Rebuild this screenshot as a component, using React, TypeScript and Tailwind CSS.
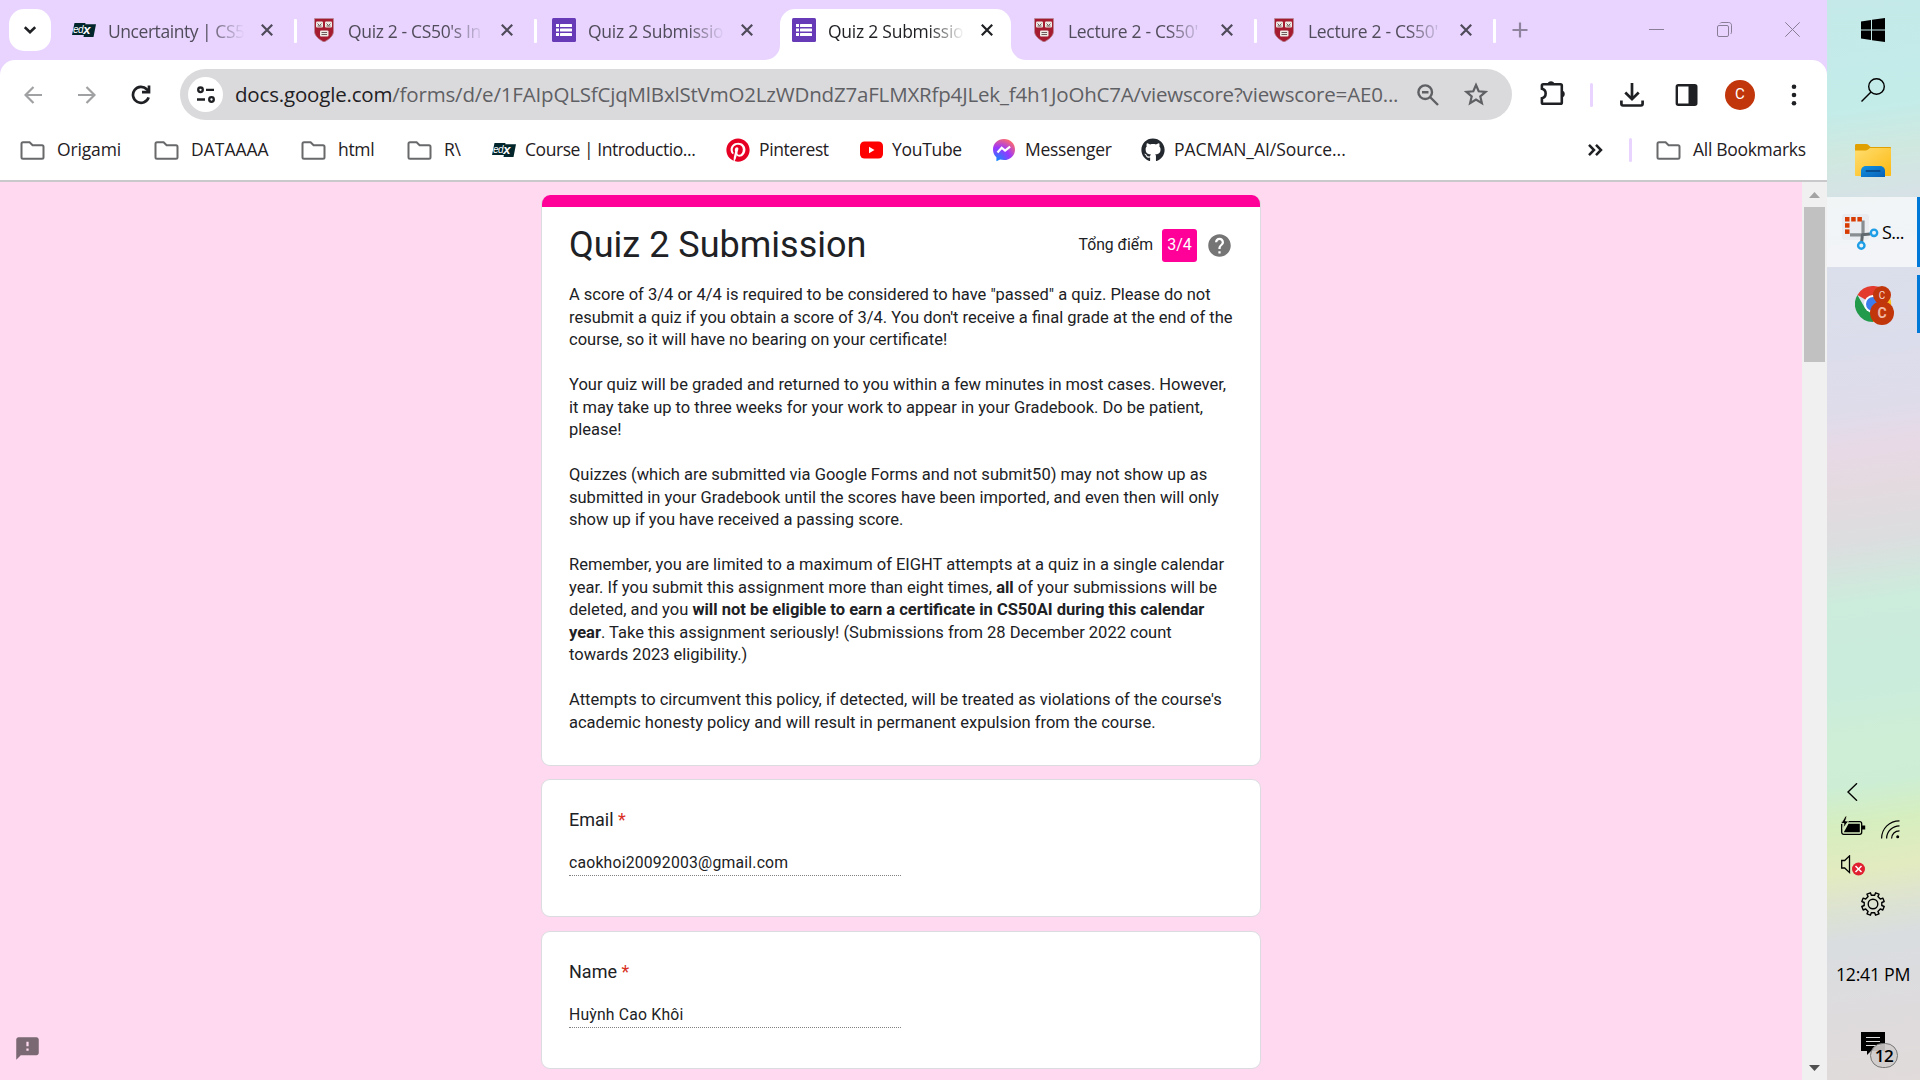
import type { ReactNode } from "react";
import { FaGithub, FaPinterest } from "react-icons/fa";

const SEGOE = "font-['Open_Sans','Noto_Sans',sans-serif]";

function Shield() {
  return (
    <svg width="24" height="24" viewBox="0 0 24 24">
      <path d="M2.500 .5h19v13c0 4-4 8-9.500 10.500C6.500 21.500 2.500 17.500 2.500 13.500z" fill="#a51c30" stroke="#b98a9a" strokeWidth=".8" />
      <g fill="#efe9e4">
        <rect x="4" y="3.500" width="7" height="6" rx="1" />
        <rect x="13" y="3.500" width="7" height="6" rx="1" />
        <rect x="8" y="12.500" width="8.500" height="6" rx="1" />
      </g>
      <g fill="none" stroke="#6d5b59" strokeWidth="1">
        <path d="M5.500 5.500l2 2 2-2M5.500 8h4M14.500 5.500l2 2 2-2M14.500 8h4M9.500 14.500h5.500M9.500 16.500h5.500" />
      </g>
    </svg>
  );
}

function FormsIcon() {
  return (
    <svg width="24" height="24" viewBox="0 0 24 24">
      <rect width="24" height="24" rx="1.500" fill="#673ab7" />
      <g fill="#fff">
        <rect x="4" y="6" width="3" height="3" />
        <rect x="4" y="10.500" width="3" height="3" />
        <rect x="4" y="15" width="3" height="3" />
        <rect x="8" y="6" width="12" height="3" rx=".5" />
        <rect x="8" y="10.500" width="12" height="3" rx=".5" />
        <rect x="8" y="15" width="12" height="3" rx=".5" />
      </g>
    </svg>
  );
}

function EdxIcon() {
  return (
    <span className="relative flex h-6 w-6 items-center">
      <svg className="absolute inset-0" width="24" height="24" viewBox="0 0 24 24">
        <path d="M2.500 5h11l-.3 1.300H24L21.500 19h-10l.4-2H0z" fill="#02262b" />
      </svg>
      <span className="relative mb-1 pl-[1px] font-['Liberation_Sans',sans-serif] text-[10px] leading-none tracking-[-0.5px] text-white italic">
        ed<b className="relative top-px text-[13px]">x</b>
      </span>
    </span>
  );
}

function Cross({ color }: { color: string }) {
  return (
    <svg width="12" height="12" viewBox="0 0 12 12" fill="none" stroke={color} strokeWidth="2.200">
      <path d="M.8 .8l10.400 10.400M11.200 .8L.8 11.200" />
    </svg>
  );
}

function Folder() {
  return (
    <svg width="25" height="19" viewBox="0 0 25 19" fill="none" stroke="#68696b" strokeWidth="2">
      <path d="M3 1.200h6.600l3 3H22c.9 0 1.500.7 1.500 1.500v10.600c0 .8-.7 1.500-1.500 1.500H3c-.9 0-1.500-.7-1.500-1.500V2.700c0-.8.6-1.500 1.500-1.500z" />
    </svg>
  );
}

type TabProps = { icon: ReactNode; title: string; active?: boolean; divider?: boolean; track: string; last?: boolean };

function Tab({ icon, title, active, divider, track, last }: TabProps) {
  return (
    <div className={`relative flex h-[51px] shrink-0 items-center ${last ? "w-[239px]" : "w-[240px]"}`}>
      <div className={`relative flex h-full items-center pb-[9px] pl-3 ${active ? "w-[231px] rounded-t-[15px] bg-white" : last ? "w-[230px]" : "w-[231px]"}`}>
        {active && (
          <>
            <span className="absolute bottom-0 left-[-15px] h-[15px] w-[15px] bg-white">
              <span className="block h-full w-full rounded-br-[15px] bg-[#e8d4ff]" />
            </span>
            <span className="absolute right-[-15px] bottom-0 h-[15px] w-[15px] bg-white">
              <span className="block h-full w-full rounded-bl-[15px] bg-[#e8d4ff]" />
            </span>
          </>
        )}
        {icon}
        <span
          className={`ml-3 w-[138px] pt-[3px] text-[17.5px] whitespace-nowrap [mask-image:linear-gradient(to_right,black_72%,transparent_99%)] ${track} ${active ? "text-[#1f2023]" : "text-[#514c5b]"}`}
        >
          {title}
        </span>
        <span className="ml-auto pr-[18px]">
          <Cross color={active ? "#1f2023" : "#4f4a59"} />
        </span>
      </div>
      {divider && <span className="mb-[7px] ml-[3px] h-6 w-[3px] rounded-[1px] bg-white" />}
    </div>
  );
}

function TabStrip() {
  return (
    <div className="flex h-[60px] items-start bg-[#e8d4ff] pt-[9px]">
      <div className="ml-[9px] flex h-[42px] w-[42px] items-center justify-center rounded-[15px] bg-white">
        <svg width="12" height="8" viewBox="0 0 12 8" fill="none" stroke="#1f2023" strokeWidth="2.600">
          <path d="M.8 1.200L6 6.200l5.200-5" />
        </svg>
      </div>
      <div className="ml-[9px] flex">
        <Tab icon={<EdxIcon />} title="Uncertainty | CS5" divider track="tracking-[-0.45px]" />
        <Tab icon={<Shield />} title="Quiz 2 - CS50's In" divider track="tracking-[-0.35px]" />
        <Tab icon={<FormsIcon />} title="Quiz 2 Submissio" track="tracking-[-0.25px]" />
        <Tab icon={<FormsIcon />} title="Quiz 2 Submissio" active track="tracking-[-0.25px]" />
        <Tab icon={<Shield />} title="Lecture 2 - CS50'" divider track="tracking-[-0.3px]" />
        <Tab icon={<Shield />} title="Lecture 2 - CS50'" divider last track="tracking-[-0.3px]" />
      </div>
      <svg className="mt-[13px] ml-[13px]" width="16" height="16" viewBox="0 0 16 16" fill="none" stroke="#90839e" strokeWidth="2.200">
        <path d="M8 .5v15M.5 8h15" />
      </svg>
      <div className="mt-[13px] mr-[27px] ml-auto flex items-center gap-[53px] text-[#8a7e97]">
        <svg width="15" height="15" viewBox="0 0 15 15" stroke="currentColor"><path d="M0 7.500h15" /></svg>
        <svg width="15" height="15" viewBox="0 0 15 15" fill="none" stroke="currentColor">
          <rect x=".5" y="3.500" width="11" height="11" rx="1.500" />
          <path d="M3 1.500C3.300 .8 4 .5 4.800 .5h7c1.500 0 2.700 1.200 2.700 2.700v7c0 .8-.4 1.500-1 1.800" />
        </svg>
        <svg width="15" height="15" viewBox="0 0 15 15" stroke="currentColor"><path d="M.3 .3l14.400 14.400M14.700 .3L.3 14.700" /></svg>
      </div>
    </div>
  );
}

function Toolbar() {
  return (
    <div className="bg-[#e8d4ff]">
      <div className="flex h-[69px] items-center rounded-t-[15px] bg-white">
        <svg className="ml-6" width="18" height="18" viewBox="0 0 18 18" fill="none" stroke="#a0a1a3" strokeWidth="2.200">
          <path d="M18 9H1.500M9.500 .9L1.500 9l8 8.100" />
        </svg>
        <svg className="ml-9" width="18" height="18" viewBox="0 0 18 18" fill="none" stroke="#a0a1a3" strokeWidth="2.200">
          <path d="M0 9h16.500M8.500 .9l8 8.100-8 8.100" />
        </svg>
        <svg className="ml-[35px]" width="20" height="20" viewBox="0 0 20 20" fill="none" stroke="#1f2023" strokeWidth="2.700">
          <path d="M17.600 12.300A8 8 0 1 1 15.800 4.300L18 6.500" />
          <path d="M18 .5v6.700h-7" />
        </svg>
        <div className="ml-[29px] flex h-[51px] w-[1332px] items-center rounded-full bg-[#dadadc] pl-2">
          <span className="flex h-[35px] w-[35px] items-center justify-center rounded-full bg-white">
            <svg width="20" height="18" viewBox="0 0 20 18" fill="none" stroke="#1f2023" strokeWidth="2.300">
              <circle cx="4.500" cy="3.800" r="2.300" />
              <path d="M10 3.800h8M1 13.500h8" />
              <circle cx="15.500" cy="13.500" r="2.300" />
            </svg>
          </span>
          <span className="ml-[12px] w-[1168px] text-[20.500px] tracking-[-0.18px] whitespace-nowrap text-[#5f6064]">
            <span className="text-[#1f2023]">docs.google.com</span>
            /forms/d/e/1FAIpQLSfCjqMlBxlStVmO2LzWDndZ7aFLMXRfp4JLek_f4h1JoOhC7A/viewscore?viewscore=AE0...
          </span>
          <svg className="ml-[14px]" width="22" height="22" viewBox="0 0 22 22" fill="none" stroke="#5f6064" strokeWidth="2.400">
            <circle cx="8.200" cy="8.200" r="6.800" />
            <path d="M13 13l8 8M5 8.200h6.500" />
          </svg>
          <svg className="mb-0.5 ml-[25px]" width="24" height="24" viewBox="0 0 24 24" fill="none" stroke="#5f6064" strokeWidth="2.200">
            <path d="M12 3l2.700 6.300 6.800.6-5.200 4.500 1.600 6.700L12 17.500l-5.900 3.600 1.600-6.700-5.200-4.500 6.800-.6z" />
          </svg>
        </div>
        <svg className="mb-1 ml-[27px]" width="27" height="26" viewBox="0 0 27 26">
          <path d="M5 4.200h16.500c.8 0 1.300.5 1.300 1.300v17c0 .8-.5 1.300-1.300 1.300H4.200c-.8 0-1.300-.5-1.300-1.300v-4.300c5-1 5-8.400 0-9.400V5.500c0-.8.5-1.300 1.300-1.300z" fill="none" stroke="#1f2023" strokeWidth="2.600" />
          <path d="M8.500 4a3.600 3.600 0 0 1 7 0zM23 10.500a3.600 3.600 0 0 1 0 7z" fill="#1f2023" />
        </svg>
        <span className="ml-6 h-6 w-[3px] rounded-sm bg-[#e8d4ff]" />
        <svg className="ml-[27px]" width="24" height="24" viewBox="0 0 24 24" fill="none" stroke="#1f2023" strokeWidth="2.700">
          <path d="M12 0v15.500M5.300 9.500l6.700 6.700 6.700-6.700M1.400 17.500v3.300c0 1 .6 1.700 1.600 1.700h18c1 0 1.600-.7 1.600-1.700v-3.300" />
        </svg>
        <svg className="ml-[31px]" width="23" height="22" viewBox="0 0 23 22">
          <rect x="1.800" y="1.200" width="19.500" height="19.500" rx="1.500" fill="none" stroke="#1f2023" strokeWidth="2.400" />
          <path d="M13.500 1H20c1 0 1.700.8 1.700 1.800v16.400c0 1-.8 1.800-1.700 1.800h-6.500z" fill="#1f2023" />
        </svg>
        <span className="ml-[27px] flex h-[30px] w-[30px] items-center justify-center rounded-full bg-[#c1360b] font-['Roboto',sans-serif] text-[15px] text-white">C</span>
        <svg className="ml-[36px]" width="6" height="22" viewBox="0 0 6 22" fill="#1f2023">
          <circle cx="3" cy="2.700" r="2.300" /><circle cx="3" cy="11" r="2.300" /><circle cx="3" cy="19.300" r="2.300" />
        </svg>
      </div>
    </div>
  );
}

function Bookmark({ icon, label, box, gap = "ml-[9px]" }: { icon: ReactNode; label: string; box: string; gap?: string }) {
  return (
    <div className={`flex shrink-0 items-center whitespace-nowrap ${box}`}>
      <span className="flex w-[25px] shrink-0 items-center">{icon}</span>
      <span className={`-mt-0.5 ${gap}`}>{label}</span>
    </div>
  );
}

function BookmarksBar() {
  return (
    <div className="flex h-[51px] items-center bg-white pb-[9px] pl-5 text-[17.5px] text-[#1f2023]">
      <Bookmark icon={<Folder />} label="Origami" gap="ml-3" box="w-[134px] tracking-[-0.15px]" />
      <Bookmark icon={<Folder />} label="DATAAAA" gap="ml-3" box="w-[147px] tracking-[0px]" />
      <Bookmark icon={<Folder />} label="html" gap="ml-3" box="w-[106px] tracking-[-0.3px]" />
      <Bookmark icon={<Folder />} label="R\" gap="ml-3" box="w-[85px] tracking-[-0.2px]" />
      <Bookmark icon={<EdxIcon />} label="Course | Introductio..." gap="ml-2" box="w-[234px] tracking-[-0.45px]" />
      <Bookmark icon={<FaPinterest size={24} color="#e60023" />} label="Pinterest" gap="ml-2" box="w-[133px] tracking-[-0.4px]" />
      <Bookmark
        icon={
          <svg width="24" height="24" viewBox="0 0 24 24">
            <rect x="1" y="3.500" width="23" height="17" rx="4.500" fill="#f00" />
            <path d="M10 8.800v6.400l5.500-3.200z" fill="#fff" />
          </svg>
        }
        label="YouTube"
        gap="ml-2"
        box="w-[133px] tracking-[-0.3px]"
      />
      <Bookmark
        icon={
          <svg width="24" height="24" viewBox="0 0 24 24">
            <defs>
              <radialGradient id="msg" cx=".2" cy="1" r="1.100">
                <stop offset="0" stopColor="#0a8dff" />
                <stop offset=".55" stopColor="#9a36ff" />
                <stop offset="1" stopColor="#ff6a6c" />
              </radialGradient>
            </defs>
            <path d="M12 1C5.700 1 1 5.500 1 11.500c0 3.200 1.300 5.900 3.400 7.800v4l3.700-1.700c1.200.3 2.500.5 3.900.5 6.300 0 11-4.600 11-10.600S18.300 1 12 1z" fill="url(#msg)" />
            <path d="M5.500 14.500L9.700 9.700l3.400 2.900 5-4" fill="none" stroke="#fff" strokeWidth="2.200" />
          </svg>
        }
        label="Messenger"
        gap="ml-2"
        box="w-[149px] tracking-[-0.3px]"
      />
      <Bookmark icon={<FaGithub size={24} color="#24292f" />} label="PACMAN_AI/Source..." gap="ml-2" box="w-[260px] tracking-[-0.05px]" />
      <svg className="ml-auto shrink-0" width="15" height="12" viewBox="0 0 15 12" fill="none" stroke="#1f2023" strokeWidth="2.500">
        <path d="M1 .9L6 6l-5 5.100M8 .9L13 6l-5 5.100" />
      </svg>
      <span className="ml-[26px] h-6 w-[3px] rounded-sm bg-[#e8d4ff]" />
      <Bookmark icon={<Folder />} label="All Bookmarks" gap="ml-3" box="ml-6 w-[171px] tracking-[-0.3px]" />
    </div>
  );
}

function Field({ label, value, space }: { label: string; value: string; space: string }) {
  return (
    <section className={`shrink-0 rounded-[9px] border border-[#dadce0] bg-white pl-[27px] ${space}`}>
      <h2 className="mt-[26px] text-[18px] leading-[27px] text-[#202124]">
        {label} <span className="text-[#d93025]">*</span>
      </h2>
      <div className="mt-[17px] w-[332px] border-b border-dotted border-[#808184] text-[15.750px] leading-[25px] tracking-[0.2px] text-[#202124]">{value}</div>
    </section>
  );
}

function FormPage() {
  return (
    <main className="relative flex flex-1 flex-col overflow-hidden bg-[#ffd9f0] pt-[13px] pl-[541px] font-['Roboto',sans-serif] text-[#202124]">
      <div className="flex w-[720px] flex-col">
        <section className="h-[571px] shrink-0 overflow-hidden rounded-[9px] border border-t-0 border-[#dadce0] bg-white">
          <div className="-mx-px h-3 bg-[#ff0099]" />
          <div className="px-[27px]">
            <div className="flex h-[60px] items-center pt-[16px]">
              <h1 className="text-[36px] leading-[45px]">Quiz 2 Submission</h1>
              <span className="ml-auto text-[15.750px]">Tổng điểm</span>
              <span className="mt-px ml-[9px] flex h-[33px] w-[35px] items-center justify-center rounded-[3px] bg-[#ff0099] pb-[2px] text-[16px] text-white">3/4</span>
              <svg className="ml-[9px] mr-0" width="27" height="27" viewBox="0 0 24 24" fill="#757575">
                <path d="M12 2C6.480 2 2 6.480 2 12s4.480 10 10 10 10-4.480 10-10S17.520 2 12 2zm1 17h-2v-2h2v2zm2.070-7.750l-.9.920C13.450 12.900 13 13.500 13 15h-2v-.5c0-1.100.45-2.100 1.170-2.830l1.240-1.260c.37-.36.590-.86.590-1.410 0-1.100-.9-2-2-2s-2 .9-2 2H8c0-2.210 1.790-4 4-4s4 1.790 4 4c0 .88-.36 1.680-.93 2.250z" />
              </svg>
            </div>
            <div className="mt-[17px] text-[16.500px] leading-[22.500px] whitespace-nowrap">
              <p>A score of 3/4 or 4/4 is required to be considered to have "passed" a quiz. Please do not<br />resubmit a quiz if you obtain a score of 3/4. You don't receive a final grade at the end of the<br />course, so it will have no bearing on your certificate!</p>
              <p className="mt-[22.500px]">Your quiz will be graded and returned to you within a few minutes in most cases. However,<br />it may take up to three weeks for your work to appear in your Gradebook. Do be patient,<br />please!</p>
              <p className="mt-[22.500px]">Quizzes (which are submitted via Google Forms and not submit50) may not show up as<br />submitted in your Gradebook until the scores have been imported, and even then will only<br />show up if you have received a passing score.</p>
              <p className="mt-[22.500px]">Remember, you are limited to a maximum of EIGHT attempts at a quiz in a single calendar<br />year. If you submit this assignment more than eight times, <b>all</b> of your submissions will be<br />deleted, and you <b>will not be eligible to earn a certificate in CS50AI during this calendar</b><br /><b>year</b>. Take this assignment seriously! (Submissions from 28 December 2022 count<br />towards 2023 eligibility.)</p>
              <p className="mt-[22.500px]">Attempts to circumvent this policy, if detected, will be treated as violations of the course's<br />academic honesty policy and will result in permanent expulsion from the course.</p>
            </div>
          </div>
        </section>
        <Field label="Email" value="caokhoi20092003@gmail.com" space="mt-[13px] h-[138px]" />
        <Field label="Name" value="Huỳnh Cao Khôi" space="mt-[14px] h-[138px]" />
      </div>
      <svg className="absolute bottom-[18px] left-[14px]" width="27" height="27" viewBox="0 0 24 24" fill="#7a6872">
        <path d="M20 2H4c-1.100 0-1.990.9-1.990 2L2 22l4-4h14c1.100 0 2-.9 2-2V4c0-1.100-.9-2-2-2zm-7 12h-2v-2h2v2zm0-4h-2V6h2v4z" />
      </svg>
    </main>
  );
}

function Scrollbar() {
  return (
    <div className="flex w-[25px] flex-col items-center bg-[#f0f0f0]">
      <svg className="mt-[10px]" width="11" height="6" viewBox="0 0 11 6" fill="#a3a3a3"><path d="M5.500 0L11 6H0z" /></svg>
      <div className="mt-[9px] h-[155px] w-[21px] bg-[#c1c1c1]" />
      <svg className="mt-auto mb-[9px]" width="11" height="6" viewBox="0 0 11 6" fill="#505050"><path d="M5.500 6L0 0h11z" /></svg>
    </div>
  );
}

function Taskbar() {
  return (
    <aside className="flex w-[93px] flex-col items-center bg-[linear-gradient(172deg,#c4e9e8_0px,#c3ece9_110px,#cfe8df_155px,#d6e2e6_200px,#dadfeb_270px,#dcddec_350px,#dfdcea_410px,#e8d9e6_450px,#e3dadf_490px,#dcdddf_540px,#ccecdc_600px,#c9ecdc_680px,#cfeed6_740px,#cdeed5_780px,#d6eebf_820px,#e2ebbf_865px,#dde3d0_900px,#d9dde0_935px,#dedbdd_1010px,#e1dbda_1090px)] text-black">
      <div className="flex h-[60px] items-center pr-px">
        <svg width="24" height="24" viewBox="0 0 24 24"><path d="M0 3.500l10-1.500v9.500H0zM11 1.800L24 0v11.500H11zM0 12.500h10V22L0 20.600zM11 12.500h13V24l-13-1.800z" /></svg>
      </div>
      <div className="flex h-[60px] items-center pr-px">
        <svg width="24" height="24" viewBox="0 0 24 24" fill="none" stroke="black" strokeWidth="1.400"><circle cx="15.500" cy="8.500" r="7.800" /><path d="M10 14L.5 23.500" /></svg>
      </div>
      <div className="flex h-[77px] items-center pt-[4px] pr-px">
        <svg width="36" height="33" viewBox="0 0 36 33">
          <defs>
            <linearGradient id="fold" x1="0" y1="0" x2="1" y2="1"><stop stopColor="#ffde70" /><stop offset="1" stopColor="#fcb912" /></linearGradient>
            <linearGradient id="tray" x1="0" y1="0" x2="1" y2="1"><stop stopColor="#1493e0" /><stop offset="1" stopColor="#0560b8" /></linearGradient>
          </defs>
          <path d="M0 1.500C0 .5.500 0 1.500 0h9.500c1 0 2 .4 2.700 1.200L15.500 3H35c.6 0 1 .4 1 1v4H0z" fill="#e0a000" />
          <path d="M0 6.500h10.500c1 0 1.800-.3 2.500-1L15 4h20c.6 0 1 .4 1 1v26c0 .6-.4 1-1 1H1c-.6 0-1-.4-1-1z" fill="url(#fold)" />
          <path d="M6 33v-6c0-2.500 1.700-5 5-5h14c3.300 0 5 2.500 5 5v6z" fill="url(#tray)" />
          <rect x="10.500" y="26.300" width="15" height="1.500" rx=".7" fill="#05417f" />
        </svg>
      </div>
      <div className="flex h-[70px] w-full items-center border-r-[3px] border-[#0078d7] bg-white/65 pl-[15px]">
        <svg width="37" height="36" viewBox="0 0 37 36">
          <rect x="0" y="0" width="27" height="26" rx="3" fill="#e9ecf0" />
          <path d="M21 6.500v14M8 20.800h13" stroke="#888d92" strokeWidth="3.200" fill="none" />
          <path d="M20 20.800l8-.8M20.500 20l-1 9" stroke="#5f686f" strokeWidth="3" fill="none" />
          <g fill="#d83b01">
            <rect x="3" y="3" width="4.500" height="4.500" /><rect x="9.200" y="3" width="4.500" height="4.500" /><rect x="15.400" y="3" width="4.500" height="4.500" />
            <rect x="3" y="9.200" width="4.500" height="4.500" /><rect x="3" y="15.400" width="4.500" height="4.500" />
          </g>
          <circle cx="32" cy="18.800" r="3.200" fill="#e8f3fa" stroke="#1d9ee6" strokeWidth="2.400" />
          <circle cx="19.300" cy="31.500" r="3.200" fill="#e8f3fa" stroke="#1d9ee6" strokeWidth="2.400" />
        </svg>
        <span className="ml-[3px] text-[18px] tracking-[-0.5px]">S...</span>
      </div>
      <div className="mt-2 flex h-[58px] w-full justify-center border-r-[3px] border-[#0078d7] pt-[11px] pl-[5px]">
        <svg width="40" height="40" viewBox="0 0 40 40">
          <path d="M18 18L33.600 9A18 18 0 0 1 18 36z" fill="#fcc31e" />
          <path d="M18 18L2.400 9a18 18 0 0 1 31.200 0z" fill="#e33b2e" />
          <path d="M2.400 9l7.800 13.500L18 27v9A18 18 0 0 1 2.400 9z" fill="#229a4b" />
          <circle cx="18" cy="18" r="9" fill="#fff" />
          <circle cx="18" cy="18" r="7" fill="#3b7ded" />
          <circle cx="27" cy="9" r="9" fill="#c1360b" />
          <circle cx="27" cy="27" r="12" fill="#c1360b" />
          <text x="27" y="12.800" textAnchor="middle" fontSize="10" fill="#f6d9cf" fontFamily="Roboto, sans-serif">C</text>
          <text x="27" y="32" textAnchor="middle" fontSize="14" fontWeight="700" fill="#f0b9a8" fontFamily="Roboto, sans-serif">C</text>
        </svg>
      </div>
      <div className="mt-auto flex w-full flex-col">
        <svg className="ml-5" width="11" height="18" viewBox="0 0 11 18" fill="none" stroke="black" strokeWidth="1.400"><path d="M10 .3L1 9l9 8.700" /></svg>
        <div className="mt-[15px] flex items-end">
          <svg className="ml-[14px]" width="25" height="20" viewBox="0 0 25 20">
            <rect x=".7" y="5.700" width="20" height="12.600" rx="2" fill="none" stroke="black" strokeWidth="1.300" />
            <path d="M2.800 16.300L7.500 7.700H18.800v8.600H2.800zM21 9.500h3.200v4H21z" />
            <path d="M4.500 0L0 7.500h3L2 12.500 7.500 5h-3L6 0z" stroke="#dcedc0" strokeWidth=".8" />
          </svg>
          <svg className="ml-[15px] -mb-[3px]" width="19" height="19" viewBox="0 0 19 19" fill="none" stroke="black" strokeWidth="1.200">
            <path d="M.6 18.500C.6 8.500 8.500 .8 18.500 .8M5.600 18.500C5.600 11.500 11.500 5.800 18.500 5.800M10.600 18.500c0-4.500 3.400-7.700 7.900-7.700" />
            <circle cx="16.700" cy="16.700" r="1.500" fill="black" stroke="none" />
          </svg>
        </div>
        <svg className="mt-[19px] ml-[14px]" width="25" height="21" viewBox="0 0 25 21">
          <path d="M.7 5.500h3L8.500 .9v16.700L3.700 13h-3z" fill="none" stroke="black" strokeWidth="1.300" />
          <circle cx="17.500" cy="14" r="6.500" fill="#e02030" />
          <path d="M14.500 11l6 6M20.500 11l-6 6" stroke="white" strokeWidth="1.500" />
        </svg>
        <svg className="mt-4 ml-[34px]" width="24" height="24" viewBox="0 0 24 24" fill="none" stroke="black" strokeWidth="1.400" strokeLinejoin="round">
          <circle cx="12" cy="12" r="4.800" />
          <path d="M10.300 3.200L9.400 .8 6 2.200l1.100 2.400-2.400 2.500-2.500-1L.8 9.500l2.400 1v3l-2.400 1L2.200 18l2.500-1.100 2.400 2.500L6 21.800l3.400 1.400.9-2.400h3.400l.9 2.400 3.400-1.400-1.100-2.400 2.400-2.500 2.500 1.100 1.400-3.500-2.400-1v-3l2.400-1-1.400-3.400-2.500 1-2.400-2.500L18 2.200 14.600 .8l-.9 2.400z" />
        </svg>
        <span className="mt-[45px] mb-px ml-[9px] text-[17.750px] leading-[26px] tracking-[-0.3px] whitespace-nowrap">12:41 PM</span>
        <div className="relative mt-[44px] mb-[17px] ml-[34px] h-[31px]">
          <svg width="24" height="24" viewBox="0 0 24 24">
            <path d="M0 0h24v19H10l-4 4v-4H0z" />
            <path d="M5 5.500h14M5 9.500h14M5 13.500h14" stroke="#ddd" strokeWidth="1.200" />
          </svg>
          <span className="absolute top-[11px] left-[9px] flex h-[25px] w-[28px] items-center justify-center rounded-full border border-[#777] bg-[#cfcccb]/90 text-[17px] font-semibold tracking-[-0.5px]">12</span>
        </div>
      </div>
    </aside>
  );
}

export default function App() {
  return (
    <div className={`flex h-[1080px] w-[1920px] overflow-hidden ${SEGOE}`}>
      <div className="flex w-[1827px] flex-col">
        <TabStrip />
        <Toolbar />
        <BookmarksBar />
        <div className="h-[2px] shrink-0 bg-[#c9c9cb]" />
        <div className="flex min-h-0 flex-1">
          <FormPage />
          <Scrollbar />
        </div>
      </div>
      <Taskbar />
    </div>
  );
}
